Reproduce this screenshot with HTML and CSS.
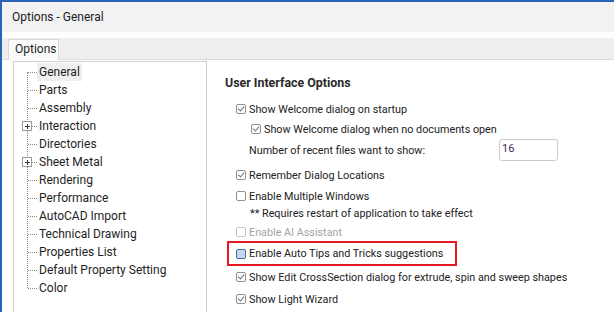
FILE: index.html
```html
<!DOCTYPE html>
<html lang="en">
<head>
    <meta charset="UTF-8">
    <title>Options - General</title>
    <link rel="stylesheet" href="styles.css">
</head>
<body>
    <div class="window">
        <div class="titlebar">Options - General</div>
        <div class="strip"></div>
        <div class="tabbar">
            <div class="tab">Options</div>
        </div>

        <div class="content">
            <!-- Left tree -->
            <div class="tree">
                <ul class="tree-list">
                    <li class="selected"><span>General</span></li>
                    <li><span>Parts</span></li>
                    <li><span>Assembly</span></li>
                    <li class="expandable"><i class="plus"></i><span>Interaction</span></li>
                    <li><span>Directories</span></li>
                    <li class="expandable"><i class="plus"></i><span>Sheet Metal</span></li>
                    <li><span>Rendering</span></li>
                    <li><span>Performance</span></li>
                    <li><span>AutoCAD Import</span></li>
                    <li><span>Technical Drawing</span></li>
                    <li><span>Properties List</span></li>
                    <li><span>Default Property Setting</span></li>
                    <li><span>Color</span></li>
                </ul>
            </div>

            <!-- Options panel -->
            <div class="panel">
                <h2 class="panel-title">User Interface Options</h2>

                <div class="row r-welcome"><span class="cb checked"></span>Show Welcome dialog on startup</div>
                <div class="row indent r-nodocs"><span class="cb checked"></span>Show Welcome dialog when no documents open</div>
                <div class="row indent r-recent">
                    <span class="label">Number of recent files want to show:</span>
                    <span class="num-input">16</span>
                </div>
                <div class="row r-remember"><span class="cb checked"></span>Remember Dialog Locations</div>
                <div class="row r-multi"><span class="cb"></span>Enable Multiple Windows</div>
                <div class="row note">** Requires restart of application to take effect</div>
                <div class="row disabled r-ai"><span class="cb"></span>Enable AI Assistant</div>
                <div class="row highlight"><span class="cb focus"></span>Enable Auto Tips and Tricks suggestions</div>
                <div class="row r-cross"><span class="cb checked"></span>Show Edit CrossSection dialog for extrude, spin and sweep shapes</div>
                <div class="row r-light"><span class="cb checked"></span>Show Light Wizard</div>
            </div>
        </div>
    </div>
</body>
</html>
```

FILE: styles.css
```css
* {
    margin: 0;
    padding: 0;
    box-sizing: border-box;
}

body {
    background: #ffffff;
    font-family: Roboto, "Noto Sans", sans-serif;
    font-size: 12px;
    color: #1e1e1e;
    overflow: hidden;
}

.window {
    height: 312px;
    border-left: 2px solid #2a62b8;
    border-top: 2px solid #2a62b8;
    overflow: hidden;
}

.titlebar {
    height: 30px;
    background: #f2f2f2;
    padding-left: 10px;
    line-height: 30px;
    font-size: 12px;
    color: #1a1a1a;
}

.strip {
    height: 6px;
    background: #fdfdfd;
}

.tabbar {
    height: 22px;
    background: #eeeeee;
    border-bottom: 1px solid #dadada;
    padding-left: 6px;
    padding-top: 1px;
}

.tab {
    width: 51px;
    height: 21px;
    background: #fafafa;
    border: 1px solid #d6d6d6;
    border-bottom: none;
    padding-left: 6px;
    line-height: 19px;
    font-size: 12px;
}

.content {
    display: flex;
    padding-left: 11px;
    padding-top: 1px;
}

/* tree */
.tree {
    width: 194px;
    height: 260px;
    border: 1px solid #cfcfcf;
    border-bottom: none;
    flex-shrink: 0;
}

.tree-list {
    list-style: none;
    position: relative;
    margin-top: 1px;
}

.tree-list::before {
    content: "";
    position: absolute;
    left: 13px;
    top: 9px;
    bottom: 9px;
    border-left: 1px dotted #8a8a8a;
}

.tree-list li {
    position: relative;
    height: 18px;
    line-height: 18px;
    padding-left: 25px;
}

.tree-list li::before {
    content: "";
    position: absolute;
    left: 14px;
    top: 9px;
    width: 9px;
    border-top: 1px dotted #8a8a8a;
}

.tree-list li span {
    display: inline-block;
    padding: 0 2px 0 0;
}

.tree-list li.selected span {
    background: #efefef;
    margin-left: -2px;
    padding-left: 2px;
}

.plus {
    position: absolute;
    left: 8px;
    top: 4px;
    width: 10px;
    height: 10px;
    background: #ffffff;
    border: 1px solid #9a9a9a;
    z-index: 1;
}

.plus::before,
.plus::after {
    content: "";
    position: absolute;
    background: #3a3a3a;
}

.plus::before {
    left: 2px;
    top: 3.5px;
    width: 5px;
    height: 1px;
}

.plus::after {
    left: 4px;
    top: 1.5px;
    width: 1px;
    height: 5px;
}

/* panel */
.panel {
    padding-left: 18px;
    flex: 1;
    font-size: 10.8px;
}

.panel-title {
    font-size: 12.4px;
    font-weight: bold;
    color: #2a2a2a;
    height: 16px;
    line-height: 16px;
    margin-top: 14px;
    margin-bottom: 8px;
}

.row {
    display: flex;
    align-items: center;
    height: 20px;
    padding-left: 11px;
    white-space: nowrap;
    color: #222222;
}

.row.indent {
    padding-left: 26px;
}

.row.r-recent {
    padding-left: 24px;
    height: 22px;
}

.label {
    width: 250px;
}

.num-input {
    width: 59px;
    height: 22px;
    border: 1px solid #cbcbcb;
    border-radius: 3px;
    padding-left: 2px;
    line-height: 18px;
    font-size: 11px;
    color: #3b2f55;
}

.r-remember { margin-top: 4px; }
.r-multi { margin-top: 2px; height: 18px; }
.row.note { height: 16px; padding-left: 25px; }
.r-ai { margin-top: 2px; height: 18px; }
.r-cross { margin-top: 1px; }
.r-light { margin-top: 2px; }

.row.disabled {
    color: #a3a3a3;
}

.cb {
    width: 10px;
    height: 10px;
    border: 1px solid #8f8f8f;
    border-radius: 2px;
    margin-right: 3px;
    position: relative;
    flex-shrink: 0;
}

.disabled .cb {
    border-color: #c4c4c4;
}

.cb.checked::after {
    content: "";
    position: absolute;
    left: 2px;
    top: 0px;
    width: 3px;
    height: 5px;
    border-right: 1px solid #6e6e6e;
    border-bottom: 1px solid #6e6e6e;
    transform: rotate(40deg);
}

.cb.focus {
    background: #c6d6ee;
    border-color: #4d6f9f;
}

.row.highlight {
    display: inline-flex;
    width: 230px;
    height: 25px;
    margin-left: 2px;
    padding-left: 7px;
    border: 2px solid #e41b23;
}
```
